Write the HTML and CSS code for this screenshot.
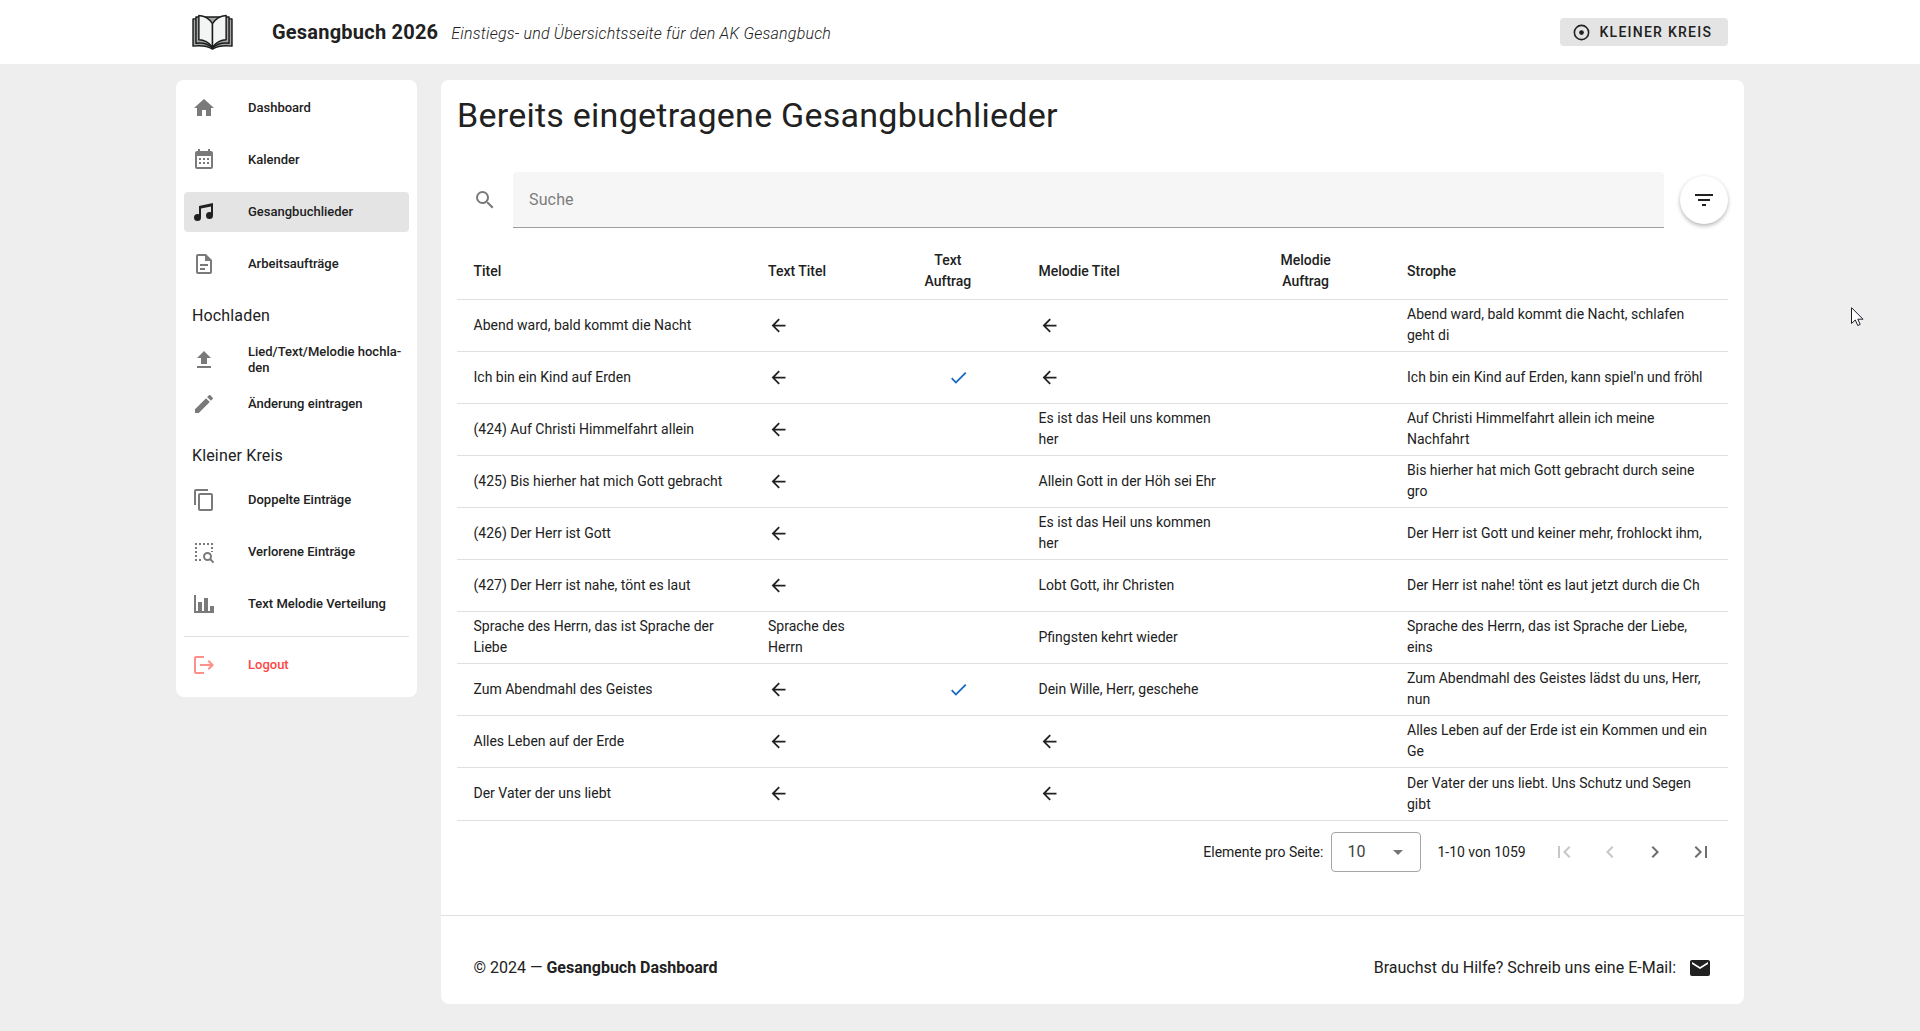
FILE: index.html
```html
<!DOCTYPE html>
<html lang="de">
<head>
<meta charset="utf-8">
<title>Gesangbuch 2026</title>
<link rel="stylesheet" href="styles.css">
</head>
<body>
<svg class="sprite" aria-hidden="true">
  <symbol id="arrow" viewBox="0 0 24 24"><path d="M20,11V13H8L13.5,18.5L12.08,19.92L4.16,12L12.08,4.08L13.5,5.5L8,11H20Z"/></symbol>
  <symbol id="check" viewBox="0 0 24 24"><path d="M21,7L9,19L3.5,13.5L4.91,12.09L9,16.17L19.59,5.59L21,7Z"/></symbol>
</svg>
<header class="topbar">
  <div class="topbar-inner">
    <svg class="logo" viewBox="0 0 42 38" stroke="#1c1c1c" stroke-width="1.5" stroke-linejoin="round">
      <path fill="#a5a7a8" d="M7 5H1V33C9 32 16 33 21 36C26 33 33 32 41 33V5H35Z"/>
      <path fill="#a5a7a8" d="M7 3H4V30C12 29 17 31 21 35C25 31 30 29 38 30V3H35Z"/>
      <path fill="#f3f5f5" d="M7 1.500C14 2 18 5 21 10V34C17 29 13 26.500 7 26.500Z"/>
      <path fill="#f3f5f5" d="M35 1.500C28 2 24 5 21 10V34C25 29 29 26.500 35 26.500Z"/>
    </svg>
    <div class="brand">Gesangbuch 2026</div>
    <div class="tagline">Einstiegs- und Übersichtsseite für den AK Gesangbuch</div>
    <button class="group-btn"><svg class="i18" viewBox="0 0 24 24"><circle cx="12" cy="12" r="9" fill="none" stroke="currentColor" stroke-width="2"/><circle cx="12" cy="12" r="3"/></svg>KLEINER KREIS</button>
  </div>
</header>
<div class="page">
  <nav class="sidebar">
    <a class="item"><svg viewBox="0 0 24 24"><path d="M10,20V14H14V20H19V12H22L12,3L2,12H5V20H10Z"/></svg>Dashboard</a>
    <a class="item"><svg viewBox="0 0 24 24"><path d="M9,10V12H7V10H9M13,10V12H11V10H13M17,10V12H15V10H17M19,3A2,2 0 0,1 21,5V19A2,2 0 0,1 19,21H5C3.89,21 3,20.1 3,19V5A2,2 0 0,1 5,3H6V1H8V3H16V1H18V3H19M19,19V8H5V19H19M9,14V16H7V14H9M13,14V16H11V14H13M17,14V16H15V14H17Z"/></svg>Kalender</a>
    <a class="item active"><svg viewBox="0 0 24 24"><path d="M21,3V15.5A3.5,3.5 0 0,1 17.5,19A3.5,3.5 0 0,1 14,15.5A3.5,3.5 0 0,1 17.5,12C18.04,12 18.55,12.12 19,12.34V6.47L9,8.6V17.5A3.5,3.5 0 0,1 5.5,21A3.5,3.5 0 0,1 2,17.5A3.5,3.5 0 0,1 5.5,14C6.04,14 6.55,14.12 7,14.34V6L21,3Z"/></svg>Gesangbuchlieder</a>
    <a class="item"><svg viewBox="0 0 24 24"><path d="M6,2A2,2 0 0,0 4,4V20A2,2 0 0,0 6,22H18A2,2 0 0,0 20,20V8L14,2H6M6,4H13V9H18V20H6V4M8,12V14H16V12H8M8,16V18H13V16H8Z"/></svg>Arbeitsaufträge</a>
    <h2 class="group">Hochladen</h2>
    <a class="item two-line"><svg viewBox="0 0 24 24"><path d="M9,16V10H5L12,3L19,10H15V16H9M5,20V18H19V20H5Z"/></svg><span>Lied/Text/Melodie hochla-<br>den</span></a>
    <a class="item"><svg viewBox="0 0 24 24"><path d="M20.71,7.04C21.1,6.65 21.1,6 20.71,5.63L18.37,3.29C18,2.9 17.35,2.9 16.96,3.29L15.12,5.12L18.87,8.87M3,17.25V21H6.75L17.81,9.93L14.06,6.18L3,17.25Z"/></svg>Änderung eintragen</a>
    <h2 class="group">Kleiner Kreis</h2>
    <a class="item"><svg viewBox="0 0 24 24"><path d="M19,21H8V7H19M19,5H8A2,2 0 0,0 6,7V21A2,2 0 0,0 8,23H19A2,2 0 0,0 21,21V7A2,2 0 0,0 19,5M16,1H4A2,2 0 0,0 2,3V17H4V3H16V1Z"/></svg>Doppelte Einträge</a>
    <a class="item"><svg viewBox="0 0 24 24"><path d="M3 3h2v2H3zM7 3h2v2H7zM11 3h2v2h-2zM15 3h2v2h-2zM19 3h2v2h-2zM3 7h2v2H3zM19 7h2v2h-2zM3 11h2v2H3zM19 11h2v1h-2zM3 15h2v2H3zM3 19h2v2H3zM7 19h2v2H7z"/><circle cx="15.500" cy="16.500" r="3.500" fill="none" stroke="currentColor" stroke-width="2"/><path d="M17.300 19.700L18.700 18.300L22.300 21.900L20.900 23.300Z"/></svg>Verlorene Einträge</a>
    <a class="item"><svg viewBox="0 0 24 24"><path d="M22,21H2V3H4V19H6V10H10V19H12V6H16V19H18V14H22V21Z"/></svg>Text Melodie Verteilung</a>
    <hr>
    <a class="item logout"><svg viewBox="0 0 24 24"><path d="M17 7L15.590 8.410L18.170 11H8V13H18.170L15.590 15.580L17 17L22 12M4 5H12V3H4C2.900 3 2 3.900 2 5V19C2 20.100 2.900 21 4 21H12V19H4V5Z"/></svg>Logout</a>
  </nav>
  <main class="content">
    <h1>Bereits eingetragene Gesangbuchlieder</h1>
    <div class="search-row">
      <svg class="magnify" viewBox="0 0 24 24"><path d="M9.5,3A6.5,6.5 0 0,1 16,9.5C16,11.11 15.41,12.59 14.44,13.73L14.71,14H15.5L20.5,19L19,20.5L14,15.5V14.71L13.73,14.44C12.59,15.41 11.11,16 9.5,16A6.5,6.5 0 0,1 3,9.5A6.5,6.5 0 0,1 9.5,3M9.5,5C7,5 5,7 5,9.5C5,12 7,14 9.5,14C12,14 14,12 14,9.5C14,7 12,5 9.5,5Z"/></svg>
      <div class="search">Suche</div>
      <button class="filter"><svg viewBox="0 0 24 24"><path d="M6,13H18V11H6M3,6V8H21V6M10,18H14V16H10V18Z"/></svg></button>
    </div>
    <table>
      <colgroup><col class="c1"><col class="c2"><col class="c3"><col class="c4"><col class="c5"><col class="c6"></colgroup>
      <thead><tr><th>Titel</th><th>Text Titel</th><th><span class="wrap">Text<br>Auftrag</span></th><th>Melodie Titel</th><th><span class="wrap">Melodie<br>Auftrag</span></th><th>Strophe</th></tr></thead>
      <tbody>
        <tr><td>Abend ward, bald kommt die Nacht</td><td><svg><use href="#arrow"/></svg></td><td></td><td><svg><use href="#arrow"/></svg></td><td></td><td>Abend ward, bald kommt die Nacht, schlafen<br>geht di</td></tr>
        <tr><td>Ich bin ein Kind auf Erden</td><td><svg><use href="#arrow"/></svg></td><td class="ok"><svg><use href="#check"/></svg></td><td><svg><use href="#arrow"/></svg></td><td></td><td>Ich bin ein Kind auf Erden, kann spiel'n und fröhl</td></tr>
        <tr><td>(424) Auf Christi Himmelfahrt allein</td><td><svg><use href="#arrow"/></svg></td><td></td><td>Es ist das Heil uns kommen<br>her</td><td></td><td>Auf Christi Himmelfahrt allein ich meine<br>Nachfahrt</td></tr>
        <tr><td>(425) Bis hierher hat mich Gott gebracht</td><td><svg><use href="#arrow"/></svg></td><td></td><td>Allein Gott in der Höh sei Ehr</td><td></td><td>Bis hierher hat mich Gott gebracht durch seine<br>gro</td></tr>
        <tr><td>(426) Der Herr ist Gott</td><td><svg><use href="#arrow"/></svg></td><td></td><td>Es ist das Heil uns kommen<br>her</td><td></td><td>Der Herr ist Gott und keiner mehr, frohlockt ihm,</td></tr>
        <tr><td>(427) Der Herr ist nahe, tönt es laut</td><td><svg><use href="#arrow"/></svg></td><td></td><td>Lobt Gott, ihr Christen</td><td></td><td>Der Herr ist nahe! tönt es laut jetzt durch die Ch</td></tr>
        <tr><td>Sprache des Herrn, das ist Sprache der<br>Liebe</td><td>Sprache des<br>Herrn</td><td></td><td>Pfingsten kehrt wieder</td><td></td><td>Sprache des Herrn, das ist Sprache der Liebe,<br>eins</td></tr>
        <tr><td>Zum Abendmahl des Geistes</td><td><svg><use href="#arrow"/></svg></td><td class="ok"><svg><use href="#check"/></svg></td><td>Dein Wille, Herr, geschehe</td><td></td><td>Zum Abendmahl des Geistes lädst du uns, Herr,<br>nun</td></tr>
        <tr><td>Alles Leben auf der Erde</td><td><svg><use href="#arrow"/></svg></td><td></td><td><svg><use href="#arrow"/></svg></td><td></td><td>Alles Leben auf der Erde ist ein Kommen und ein<br>Ge</td></tr>
        <tr><td>Der Vater der uns liebt</td><td><svg><use href="#arrow"/></svg></td><td></td><td><svg><use href="#arrow"/></svg></td><td></td><td>Der Vater der uns liebt. Uns Schutz und Segen<br>gibt</td></tr>
      </tbody>
    </table>
    <div class="pager">
      <span class="per-page">Elemente pro Seite:</span>
      <div class="select"><span>10</span><svg viewBox="0 0 24 24"><path d="M7,10L12,15L17,10H7Z"/></svg></div>
      <span class="range">1-10 von 1059</span>
      <div class="pages">
        <svg class="off" viewBox="0 0 24 24"><path d="M18.41,16.59L13.82,12L18.41,7.41L17,6L11,12L17,18L18.41,16.59M6,6H8V18H6V6Z"/></svg>
        <svg class="off" viewBox="0 0 24 24"><path d="M15.41,16.58L10.83,12L15.41,7.41L14,6L8,12L14,18L15.41,16.58Z"/></svg>
        <svg viewBox="0 0 24 24"><path d="M8.59,16.58L13.17,12L8.59,7.41L10,6L16,12L10,18L8.59,16.58Z"/></svg>
        <svg viewBox="0 0 24 24"><path d="M5.59,7.41L10.18,12L5.59,16.59L7,18L13,12L7,6L5.59,7.41M16,6H18V18H16V6Z"/></svg>
      </div>
    </div>
    <footer>
      <div>© 2024 — <strong>Gesangbuch Dashboard</strong></div>
      <div class="help">Brauchst du Hilfe? Schreib uns eine E-Mail:<svg viewBox="0 0 24 24"><path d="M20,8L12,13L4,8V6L12,11L20,6M20,4H4C2.89,4 2,4.89 2,6V18A2,2 0 0,0 4,20H20A2,2 0 0,0 22,18V6C22,4.89 21.1,4 20,4Z"/></svg></div>
    </footer>
  </main>
</div>
<svg class="cursor" viewBox="0 0 13 20"><path d="M.5 .7V16.500L4.300 13L6.800 18.500L9.200 17.400L6.800 12.200H12Z" fill="#fff" stroke="#1e1e2a"/></svg>
</body>
</html>
```
FILE: styles.css
```css
* { box-sizing: border-box; }
body { margin: 0; height: 1031px; overflow: hidden; background: #eee; color: #212121; font: 16px/24px Roboto, sans-serif; }
svg { fill: currentColor; display: block; flex: none; width: 24px; height: 24px; }
.sprite { display: none; }
button { border: 0; font: inherit; color: inherit; padding: 0; }

.topbar { background: #fff; height: 64px; }
.topbar-inner { width: 1568px; height: 64px; margin: 0 auto; padding: 0 16px; display: flex; align-items: center; }
.topbar .logo { width: 41px; height: 37px; margin-right: 39px; }
.brand { font-size: 20px; font-weight: 700; letter-spacing: .22px; margin-right: 13px; }
.tagline { font-weight: 300; font-style: italic; letter-spacing: .2px; padding-top: 3px; }
.group-btn { margin-left: auto; width: 168px; height: 28px; border-radius: 4px; background: #e4e4e4; display: flex; align-items: center; padding-left: 12px; gap: 8.500px; font-size: 14px; font-weight: 500; letter-spacing: 1.25px; }
.group-btn .i18 { width: 19px; height: 19px; }

.page { width: 1568px; margin: 16px auto 0; display: flex; align-items: flex-start; gap: 24px; }
.sidebar { width: 241px; height: 617px; background: #fff; border-radius: 8px; padding: 8px; }
.item { height: 40px; margin-bottom: 12px; padding-left: 8px; border-radius: 4px; display: flex; align-items: center; gap: 32px; font-size: 13px; line-height: 16px; font-weight: 500; white-space: nowrap; }
.item svg { color: #7a7a7a; }
.active { background: #e4e4e4; }
.active svg { color: #212121; }
.two-line { margin-bottom: 4px; }
.group { margin: 0; padding: 8px 8px 12px; font-size: 16px; line-height: 24px; font-weight: 400; letter-spacing: .15px; }
.sidebar hr { border: 0; height: 1px; background: #e0e0e0; margin: 0 0 8px; }
.logout { color: #ff4545; }
.logout svg { color: #ff8f8a; }

.content { width: 1303px; height: 924px; background: #fff; border-radius: 8px; display: flex; flex-direction: column; }
h1 { margin: 15px 16px 37px; font-size: 34px; line-height: 40px; font-weight: 400; letter-spacing: .25px; }
.search-row { display: flex; align-items: center; margin: 0 16px 0 32px; }
.magnify { width: 24px; color: #7a7a7a; margin: 0 16px 0 0; }
.search { flex: 1; height: 56px; background: #f6f6f6; border-bottom: 1px solid #9e9e9e; border-radius: 4px 4px 0 0; padding: 16px 16px 15px; color: #7d7d7d; letter-spacing: .15px; }
.filter { width: 48px; height: 48px; margin-left: 16px; border-radius: 50%; background: #fff; display: grid; place-items: center; box-shadow: 0 3px 5px -1px rgba(0,0,0,.2), 0 1px 4px rgba(0,0,0,.16); }

table { width: 1271px; margin: 12px 16px 0; table-layout: fixed; border-collapse: separate; border-spacing: 0; font-size: 14px; line-height: 21px; }
.c1 { width: 295px; } .c2 { width: 156px; } .c3 { width: 114px; } .c4 { width: 242px; } .c5 { width: 127px; }
th, td { padding: 0 0 1px 16.500px; text-align: left; vertical-align: middle; border-bottom: 1px solid #e0e0e0; white-space: nowrap; }
th { height: 60px; padding-top: 3px; padding-bottom: 0; font-weight: 500; }
td { height: 52px; }
th:nth-child(2), td:nth-child(2), th:last-child, td:last-child { padding-left: 16px; }
tbody tr:last-child td { height: 53px; }
.wrap { display: block; width: fit-content; text-align: center; }
td svg { width: 21px; height: 21px; }
.ok { color: #1867c0; }
.ok svg { margin-left: 23.500px; }

.pager { display: flex; align-items: center; justify-content: flex-end; height: 40px; margin: 11px 16px 0; font-size: 14px; }
.per-page, .range { padding-bottom: 1px; }
.select { width: 90px; height: 40px; margin: 0 16px 0 8px; border: 1px solid #a6a6a6; border-radius: 4px; display: flex; align-items: center; justify-content: space-between; padding: 0 10px 0 15px; font-size: 16px; color: #424242; }
.select svg { color: #757575; }
.pages { display: flex; gap: 21.600px; margin: 0 15px 0 26.500px; color: #6e6e6e; }
.off { color: #c7c7c7; }
footer { margin-top: auto; height: 89px; border-top: 1px solid #e0e0e0; padding: 16px 32px 0 32.500px; display: flex; justify-content: space-between; align-items: center; }
footer strong { font-weight: 700; }
.help { display: flex; align-items: center; gap: 12px; }

.cursor { position: absolute; left: 1851px; top: 307px; width: 13px; height: 20px; }
```
